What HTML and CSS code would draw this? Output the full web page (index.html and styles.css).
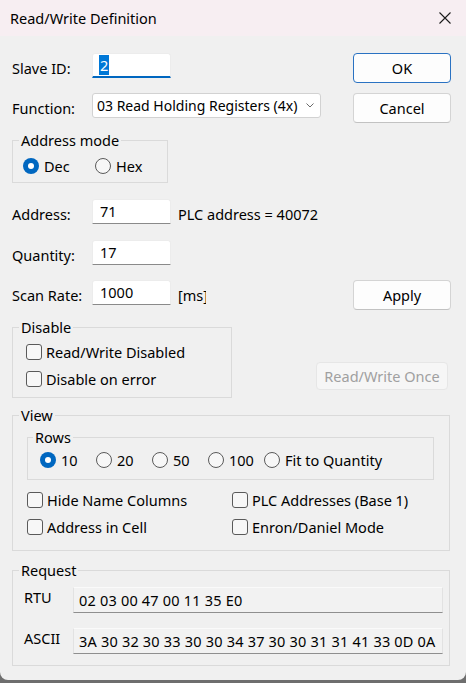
FILE: index.html
```html
<!DOCTYPE html>
<html>
<head>
  <meta charset="utf-8">
  <title>Read/Write Definition</title>
  <link rel="stylesheet" href="styles.css">
</head>
<body>
<div class="window">
  <div class="titlebar">
    <span class="title">Read/Write Definition</span>
    <svg class="close" viewBox="0 0 12 12"><path d="M0.5 0.5L11.5 11.5M11.5 0.5L0.5 11.5" stroke="#1b1b1b" stroke-width="1.1" fill="none"/></svg>
  </div>

  <div class="content">
    <div class="row row-slave">
      <span class="label">Slave ID:</span>
      <div class="edit focus"><span class="sel">2</span></div>
      <div class="btn btn-default">OK</div>
    </div>

    <div class="row row-func">
      <span class="label">Function:</span>
      <div class="select">
        <span>03 Read Holding Registers (4x)</span>
        <svg class="chev" viewBox="0 0 8 5"><path d="M0.5 0.5L4 4L7.5 0.5" stroke="#6b6b6b" fill="none"/></svg>
      </div>
      <div class="btn">Cancel</div>
    </div>

    <fieldset class="group group-mode">
      <legend>Address mode</legend>
      <div class="radios">
        <span class="radio radio-first"><i class="dot on"></i>Dec</span>
        <span class="radio"><i class="dot"></i>Hex</span>
      </div>
    </fieldset>

    <div class="row row-addr">
      <span class="label">Address:</span>
      <div class="edit">71</div>
      <span class="note">PLC address = 40072</span>
    </div>

    <div class="row row-qty">
      <span class="label">Quantity:</span>
      <div class="edit">17</div>
    </div>

    <div class="row row-scan">
      <span class="label">Scan Rate:</span>
      <div class="edit">1000</div>
      <span class="note unit">[ms]</span>
      <div class="btn">Apply</div>
    </div>

    <div class="row row-disable">
      <fieldset class="group group-disable">
        <legend>Disable</legend>
        <div class="check"><i class="box"></i>Read/Write Disabled</div>
        <div class="check"><i class="box"></i>Disable on error</div>
      </fieldset>
      <div class="btn btn-off">Read/Write Once</div>
    </div>

    <fieldset class="group group-view">
      <legend>View</legend>
      <fieldset class="group group-rows">
        <legend>Rows</legend>
        <div class="radios">
          <span class="radio radio-row radio-first"><i class="dot on"></i>10</span>
          <span class="radio radio-row"><i class="dot"></i>20</span>
          <span class="radio radio-row"><i class="dot"></i>50</span>
          <span class="radio radio-row"><i class="dot"></i>100</span>
          <span class="radio"><i class="dot"></i>Fit to Quantity</span>
        </div>
      </fieldset>
      <div class="checks">
        <div class="check"><i class="box"></i>Hide Name Columns</div>
        <div class="check"><i class="box"></i>PLC Addresses (Base 1)</div>
        <div class="check"><i class="box"></i>Address in Cell</div>
        <div class="check"><i class="box"></i>Enron/Daniel Mode</div>
      </div>
    </fieldset>

    <fieldset class="group group-request">
      <legend>Request</legend>
      <div class="req">
        <span class="req-label">RTU</span>
        <div class="readonly">02 03 00 47 00 11 35 E0</div>
      </div>
      <div class="req req-ascii">
        <span class="req-label">ASCII</span>
        <div class="readonly">3A 30 32 30 33 30 30 34 37 30 30 31 31 41 33 0D 0A</div>
      </div>
    </fieldset>
  </div>
</div>
</body>
</html>
```

FILE: styles.css
```css
* {
  box-sizing: border-box;
}
html, body {
  margin: 0;
}
body {
  background: #6e6e6e;
  font-family: "Noto Sans", "Open Sans", sans-serif;
  font-size: 14.5px;
  color: #000;
}

.window {
  width: 466px;
  height: 680px;
  background: #f0f0f0;
  border-radius: 0 0 8px 8px;
  overflow: hidden;
}

.titlebar {
  height: 36px;
  background: #f7eef2;
  display: flex;
  align-items: center;
  padding-left: 10px;
}
.title {
  flex: 1;
  line-height: 20px;
}
.close {
  width: 12px;
  height: 12px;
  margin-right: 15px;
}

.content {
  padding: 0 15px 0 12px;
}

.row {
  display: flex;
  align-items: flex-start;
}
.row-slave { margin-top: 17px; }
.row-func { margin-top: 10px; }
.row-addr { margin-top: 16px; }
.row-qty { margin-top: 16px; }
.row-scan { margin-top: 15px; }
.row-disable { margin-top: 7px; }

.label {
  width: 80px;
  line-height: 20px;
  padding-top: 5px;
}

.edit {
  width: 79px;
  height: 25px;
  background: #fff;
  border: 1px solid #ececec;
  border-bottom-color: #8a8a8a;
  border-radius: 3px 3px 0 0;
  padding: 1px 0 0 7px;
  line-height: 20px;
}
.edit.focus {
  border-bottom: 2px solid #0067c0;
  padding-left: 6px;
}
.sel {
  background: #0078d7;
  color: #fff;
  padding: 0 1px;
}

.select {
  width: 229px;
  height: 25px;
  background: #fff;
  border: 1px solid #d2d2d2;
  border-radius: 3px;
  display: flex;
  align-items: center;
  justify-content: space-between;
  padding: 0 6px 0 4px;
  font-size: 14px;
  line-height: 22px;
  white-space: nowrap;
}
.chev {
  width: 8px;
  height: 5px;
  flex: none;
}

.note {
  margin-left: 7px;
  line-height: 20px;
  padding-top: 5px;
  white-space: nowrap;
}
.unit {
  width: 28px;
  overflow: hidden;
}

.btn {
  margin-left: auto;
  width: 98px;
  height: 30px;
  background: #fdfdfd;
  border: 1px solid #d4d4d4;
  border-bottom-color: #c2c2c2;
  border-radius: 4px;
  display: flex;
  align-items: center;
  justify-content: center;
}
.btn-default {
  border-color: #2a72c2;
}
.btn-off {
  align-self: flex-end;
  width: 132px;
  height: 28px;
  margin-right: 3px;
  margin-bottom: 8px;
  background: #f6f6f6;
  border-color: #e6e6e6;
  color: #a0a0a0;
}

.group {
  margin: 0;
  border: 1px solid #dadada;
  padding: 0 0 0 6px;
  min-width: 0;
}
.group legend {
  padding: 0 2px;
  line-height: 20px;
}

.group-mode {
  width: 156px;
  margin-top: 7px;
  padding: 6px 0 6px 6px;
}
.radios {
  display: flex;
  height: 20px;
  align-items: center;
}
.radio {
  display: flex;
  align-items: center;
  width: 73px;
  line-height: 20px;
  white-space: nowrap;
}
.radio-first {
  margin-left: 4px;
}
.radio-row {
  width: 56px;
}
.dot {
  width: 16px;
  height: 16px;
  border-radius: 50%;
  border: 1px solid #5a5a5a;
  background: #f7f7f7;
  margin-right: 5px;
  display: flex;
  align-items: center;
  justify-content: center;
  flex: none;
}
.dot.on {
  border: none;
  background: #0067c0;
}
.dot.on::after {
  content: "";
  width: 6px;
  height: 6px;
  border-radius: 50%;
  background: #fff;
}

.group-disable {
  width: 220px;
  padding: 1px 0 5px 6px;
}
.check {
  display: flex;
  align-items: center;
  height: 27px;
  white-space: nowrap;
}
.group-disable .check {
  margin-left: 7px;
}
.box {
  width: 16px;
  height: 16px;
  border: 1px solid #5a5a5a;
  border-radius: 3px;
  background: #f7f7f7;
  margin-right: 4px;
  flex: none;
}

.group-view {
  width: 438px;
  margin-top: 7px;
  padding: 0 0 10px 6px;
}
.group-rows {
  width: 407px;
  margin: 2px 0 0 8px;
  padding: 3px 0 9px 5px;
}
.group-rows .radio-first {
  margin-left: 7px;
}
.checks {
  display: grid;
  grid-template-columns: 205px 1fr;
  margin: 6px 0 0 8px;
}

.group-request {
  width: 438px;
  margin-top: 9px;
  padding: 7px 0 11px 6px;
}
.req {
  display: flex;
  align-items: flex-start;
}
.req-ascii {
  margin-top: 15px;
}
.req-label {
  width: 49px;
  margin-left: 5px;
  line-height: 20px;
}
.readonly {
  width: 370px;
  height: 26px;
  background: #f2f2f2;
  border: 1px solid #e2e2e2;
  border-top-color: #fafafa;
  border-bottom-color: #8f8f8f;
  padding-left: 5px;
  line-height: 24px;
  letter-spacing: 0.2px;
  white-space: nowrap;
}
```
